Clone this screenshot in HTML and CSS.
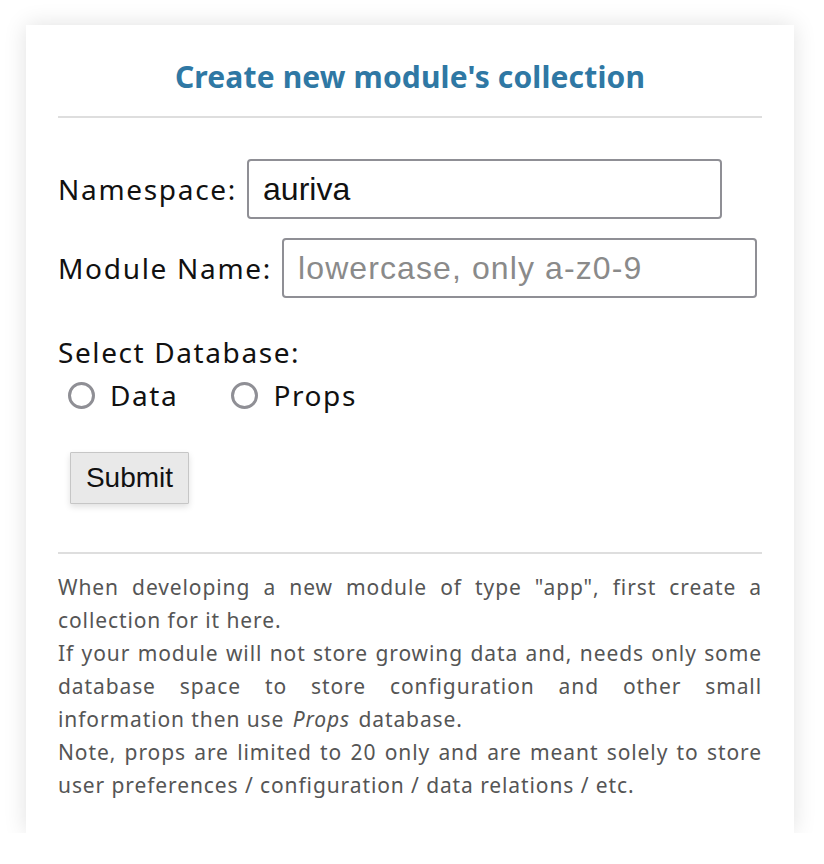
FILE: index.html
```html
<!DOCTYPE html>
<html>
<head>
<meta charset="utf-8">
<link rel="stylesheet" href="styles.css">
</head>
<body>
<div class="card">
  <h1 class="title">Create new module's collection</h1>
  <hr class="rule">
  <form class="form">
    <div class="row">
      <label class="label" for="ns">Namespace:</label>
      <input class="field" id="ns" type="text" value="auriva">
    </div>
    <div class="row">
      <label class="label" for="mn">Module Name:</label>
      <input class="field" id="mn" type="text" placeholder="lowercase, only a-z0-9">
    </div>
    <div class="select-label">Select Database:</div>
    <div class="radios">
      <label class="radio"><span class="dot"></span>Data</label>
      <label class="radio"><span class="dot"></span>Props</label>
    </div>
    <button class="submit" type="button">Submit</button>
  </form>
  <hr class="rule rule-bottom">
  <p class="note">When developing a new module of type "app", first create a collection for it here.<br>If your module will not store growing data and, needs only some database space to store configuration and other small information then use <em>Props</em> database.<br>Note, props are limited to 20 only and are meant solely to store user preferences / configuration / data relations / etc.</p>
</div>
</body>
</html>
```

FILE: styles.css
```css
html, body {
  margin: 0;
  padding: 0;
  background: #ffffff;
}
body {
  font-family: "Noto Sans", Lato, sans-serif;
  color: #111;
}
.card {
  box-sizing: border-box;
  width: 768px;
  height: 808px;
  margin: 25px 0 0 26px;
  padding: 0 32px;
  background: #fff;
  box-shadow: 0 0 22px rgba(0, 0, 0, 0.12);
}
.title {
  margin: 0;
  padding-top: 30px;
  height: 44px;
  line-height: 44px;
  text-align: center;
  font-size: 30px;
  font-weight: 700;
  letter-spacing: 0.15px;
  color: #2f78a4;
}
.rule {
  margin: 17px 0 0;
  border: 0;
  border-top: 2px solid #dedede;
  height: 0;
}
.form {
  padding-top: 41px;
}
.row {
  display: flex;
  align-items: center;
  gap: 10px;
  margin-bottom: 19px;
}
.label {
  font-size: 28px;
  line-height: 36px;
  letter-spacing: 1.7px;
  color: #111;
}
.field {
  box-sizing: border-box;
  width: 475px;
  height: 60px;
  padding: 0 14px;
  border: 2px solid #8f8f95;
  border-radius: 4px;
  font-family: "Liberation Sans", Arial, sans-serif;
  font-size: 32px;
  color: #111;
  outline: none;
}
.field::placeholder {
  color: #8a8a8a;
  letter-spacing: 1.1px;
}
.select-label {
  margin-top: 36px;
  font-size: 28px;
  line-height: 36px;
  letter-spacing: 1.6px;
}
.radios {
  display: flex;
  gap: 53px;
  padding-left: 10px;
  margin-top: 5px;
  height: 40px;
  align-items: center;
}
.radio {
  display: flex;
  align-items: center;
  gap: 15px;
  font-size: 28px;
  letter-spacing: 1.6px;
}
.dot {
  box-sizing: border-box;
  width: 27px;
  height: 27px;
  border: 3px solid #8f8f95;
  border-radius: 50%;
  background: #fff;
}
.submit {
  display: block;
  margin: 37px 0 0 12px;
  width: 119px;
  height: 52px;
  background: #e9e9e9;
  border: 1px solid #c6c6c6;
  border-radius: 1px;
  box-shadow: 0 3px 6px rgba(0, 0, 0, 0.12);
  font-family: "Liberation Sans", Arial, sans-serif;
  font-size: 28px;
  color: #111;
  padding: 0;
}
.rule-bottom {
  margin-top: 48px;
}
.note {
  margin: 17px 0 0;
  font-size: 21px;
  line-height: 33px;
  letter-spacing: 0.9px;
  color: #555;
  text-align: justify;
}
.note em {
  font-style: italic;
  display: inline-block;
  padding: 0 2px;
}
```
